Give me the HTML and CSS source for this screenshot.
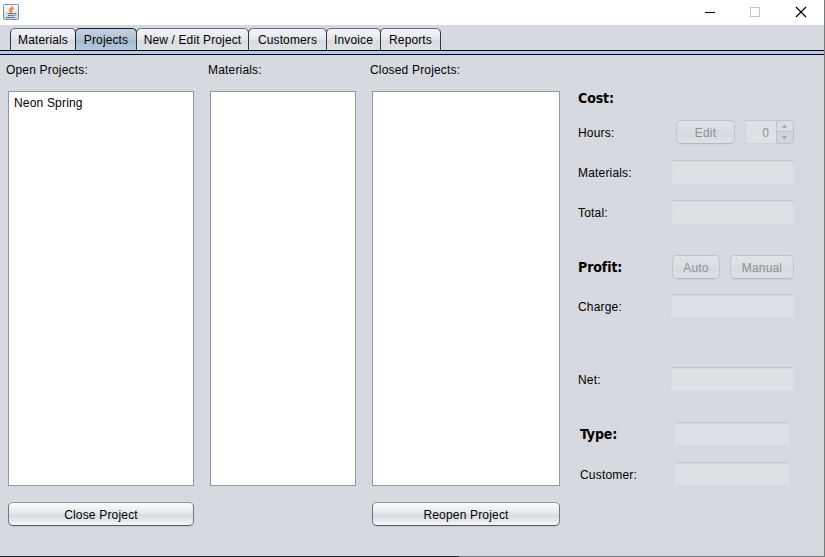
FILE: index.html
```html
<!DOCTYPE html>
<html lang="en">
<head>
<meta charset="utf-8">
<title>Projects</title>
<link rel="stylesheet" href="styles.css">
</head>
<body>
<div class="window">
  <header class="titlebar">
    <svg class="app-icon" width="16" height="16" viewBox="0 0 16 16">
      <defs><linearGradient id="g" x2="0" y2="1"><stop stop-color="#fff"/><stop offset="1" stop-color="#cbd6df"/></linearGradient></defs>
      <rect x=".5" y=".5" width="15" height="15" rx="1" fill="url(#g)" stroke="#7890a4"/>
      <path d="M9.500 2c.5 2-3.500 2.500-3 4.500L8.500 9M10.800 4.500C8.500 5.500 8 6 9 8" fill="none" stroke="#ee8a3c" stroke-width="1.600"/>
      <path d="M4.500 9.500h6.500M5 11.500h5.500M11 9.500c3-.5 2.500 1.500 0 2M3 13.500h9" fill="none" stroke="#4f7597"/>
    </svg>
    <svg class="controls" width="104" height="12" viewBox="0 0 104 12" fill="none" shape-rendering="crispEdges">
      <path d="M0 6.500h10" stroke="#000"/>
      <rect x="45.500" y="1.500" width="9" height="9" stroke="#c8c8cc"/>
      <path d="M91 1l10 10M101 1L91 11" stroke="#000" stroke-width="1.200" shape-rendering="auto"/>
    </svg>
  </header>
  <nav class="tabs">
    <div class="tab t1"><span>Materials</span></div>
    <div class="tab t2 active"><span>Projects</span></div>
    <div class="tab t3"><span>New / Edit Project</span></div>
    <div class="tab t4"><span>Customers</span></div>
    <div class="tab t5"><span>Invoice</span></div>
    <div class="tab t6"><span>Reports</span></div>
  </nav>
  <div class="rule"></div>
  <main class="content">
    <section class="column open">
      <h2><span>Open Projects:</span></h2>
      <div class="list"><span>Neon Spring</span></div>
      <button class="button"><span>Close Project</span></button>
    </section>
    <section class="column materials">
      <h2><span>Materials:</span></h2>
      <div class="list"></div>
    </section>
    <section class="column closed">
      <h2><span>Closed Projects:</span></h2>
      <div class="list"></div>
      <button class="button"><span>Reopen Project</span></button>
    </section>
    <section class="form">
      <div class="row"><strong>Cost:</strong></div>
      <div class="row gap-s"><span>Hours:</span>
        <div class="group">
          <button class="button off edit"><span>Edit</span></button>
          <div class="spinner"><div class="value">0</div>
            <svg width="18" height="24" viewBox="0 0 18 24">
              <path d="M.5.500H13q4.500 0 4.500 4.500v14q0 4.500-4.500 4.500H.5z" fill="#d0d5dd" stroke="#bbc2cc"/>
              <path d="M1 1h12q4 0 4 4v6H1z" fill="#d9dde3"/>
              <path d="M1 11.500h16" stroke="#bbc2cc"/>
              <path d="M6 8h5L8.500 4.500zM6 16h5l-2.500 3.500z" fill="#a5a9b1"/>
            </svg>
          </div>
        </div>
      </div>
      <div class="row gap-m"><span>Materials:</span><div class="field"></div></div>
      <div class="row gap-m"><span>Total:</span><div class="field"></div></div>
      <div class="row gap-profit"><strong>Profit:</strong>
        <div class="group"><button class="button off auto"><span>Auto</span></button><button class="button off manual"><span>Manual</span></button></div>
      </div>
      <div class="row gap-charge"><span>Charge:</span><div class="field wide"></div></div>
      <div class="row gap-net"><span>Net:</span><div class="field wide"></div></div>
      <div class="row gap-type inset"><strong>Type:</strong><div class="field narrow"></div></div>
      <div class="row gap-m inset"><span>Customer:</span><div class="field narrow"></div></div>
    </section>
  </main>
  <div class="edge"></div>
</div>
</body>
</html>
```
FILE: styles.css
```css
* { box-sizing: border-box; }
body {
  margin: 0;
  font: 12px/16px "Liberation Sans", Arial, sans-serif;
  letter-spacing: .18px;
  color: #000;
}
.window {
  width: 825px;
  height: 557px;
  display: flex;
  flex-direction: column;
  background: #d6d9df;
  border-right: 1px solid #77787b;
  overflow: hidden;
  white-space: nowrap;
}
.titlebar {
  height: 25px;
  flex: none;
  background: #fff;
  display: flex;
  justify-content: space-between;
  padding: 4px 15px 0 3px;
}
.controls { margin-top: 2px; }
.tabs {
  height: 25px;
  flex: none;
  display: flex;
  padding: 3px 0 0 10px;
  letter-spacing: .12px;
}
.tab {
  height: 22px;
  border: 1px solid #34363d;
  border-top-color: #6d7078;
  border-bottom: 0;
  border-radius: 5px 5px 0 0;
  margin-right: -1px;
  background: linear-gradient(#f5f6f8, #e2e5e9 50%, #d8dce1 51%, #dfe2e6);
  display: flex;
  justify-content: center;
  align-items: center;
  padding-top: 1px;
}
.t1 { width: 66px; }
.t2 { width: 62px; }
.t3 { width: 113px; }
.t4 { width: 79px; }
.t5 { width: 55px; }
.t6 { width: 61px; }
.tab.active {
  border-color: #15213a;
  background: linear-gradient(#c5d0dc, #b2c3d5 50%, #a2b8ce 51%, #b4cadf);
}
.rule {
  height: 5px;
  flex: none;
  background: #b5cbe2;
  border: solid #00001a;
  border-width: 1px 0;
}
.content {
  flex: 1;
  display: flex;
  align-items: flex-start;
  padding: 7px 30px 0 8px;
}
.edge {
  height: 1px;
  flex: none;
  background: linear-gradient(90deg, #24282b 459px, #77787b 459px);
}
.column { display: flex; flex-direction: column; }
.column h2 {
  font: inherit;
  margin: 0 0 13px -2px;
  height: 16px;
}
.list {
  height: 395px;
  background: #fff;
  border: 1px solid #9297a1;
  padding: 3px 5px;
}
.open { width: 186px; margin-right: 16px; }
.materials { width: 146px; margin-right: 16px; }
.closed { width: 188px; margin-right: 18px; }
.button {
  height: 24px;
  padding: 1px 0 0;
  font: inherit;
  letter-spacing: inherit;
  color: #000;
  border: 1px solid #70747b;
  border-top-color: #92959c;
  border-bottom-color: #55585e;
  border-radius: 5px;
  background: linear-gradient(#fcfcfd, #e5e7eb 45%, #d9dce1 55%, #e4e7eb 80%, #f7f9fb);
  box-shadow: 0 1px 0 #c5c8ce;
}
.column .button { margin-top: 16px; }
.button.off {
  color: #8e8f93;
  border-color: #c1c5cb;
  border-bottom-color: #b5b9bf;
  background: linear-gradient(#e0e3e7, #dadde2 50%, #d6dade 55%, #dde0e5);
  box-shadow: 0 1px 0 #cfd2d8;
}
.form { width: 216px; padding-top: 24px; }
.row {
  height: 24px;
  display: flex;
  justify-content: space-between;
  align-items: center;
}
.row > span { padding-top: 2px; }
.row strong {
  font: bold 14px/18px "DejaVu Sans Condensed", "DejaVu Sans", sans-serif;
  font-stretch: condensed;
  letter-spacing: -.1px;
}
.gap-s { margin-top: 10px; }
.gap-m { margin-top: 16px; }
.gap-profit { margin-top: 31px; }
.gap-charge { margin-top: 15px; }
.gap-net { margin-top: 49px; }
.gap-type { margin-top: 31px; }
.inset { padding: 0 4px 0 2px; }
.group { display: flex; gap: 10px; }
.edit { width: 59px; }
.auto { width: 48px; }
.manual { width: 64px; }
.field {
  width: 122px;
  height: 24px;
  background: #dde0e4;
  border: 1px solid #d9dce1;
  border-top-color: #c4c7cc;
  box-shadow: inset 0 1px 0 #d4d7dc;
}
.wide { width: 123px; }
.narrow { width: 116px; }
.spinner { width: 49px; display: flex; }
.value {
  width: 31px;
  height: 24px;
  padding: 4px 7px 0 0;
  text-align: right;
  color: #8e8f93;
  background: #dde0e4;
  border: 1px solid #d0d3d9;
  border-top-color: #c4c7cc;
  border-right: 0;
}
```
